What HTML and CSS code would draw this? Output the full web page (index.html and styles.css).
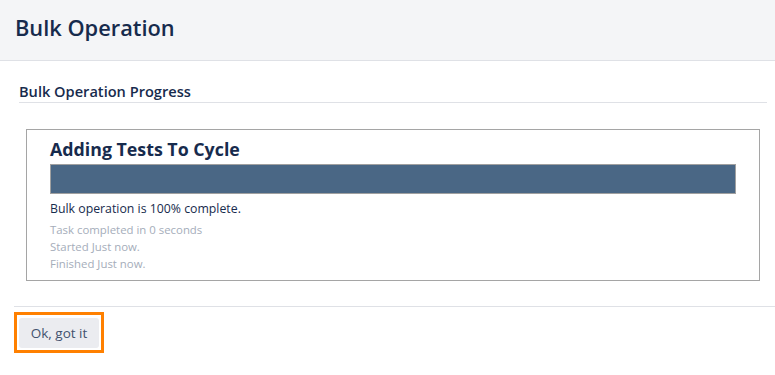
FILE: index.html
```html
<!DOCTYPE html>
<html>
<head>
<meta charset="utf-8">
<link rel="stylesheet" href="styles.css">
</head>
<body>
<header class="page-header">
  <h1 class="page-title">Bulk Operation</h1>
</header>
<main class="content">
  <h2 class="section-title">Bulk Operation Progress</h2>
  <div class="progress-box">
    <h3 class="task-title">Adding Tests To Cycle</h3>
    <div class="progress-track"><div class="progress-fill" style="width:100%"></div></div>
    <p class="status">Bulk operation is 100% complete.</p>
    <p class="meta">Task completed in 0 seconds</p>
    <p class="meta">Started Just now.</p>
    <p class="meta">Finished Just now.</p>
  </div>
</main>
<footer class="footer">
  <span class="focus-ring"><button class="btn">Ok, got it</button></span>
</footer>
</body>
</html>
```
FILE: styles.css
```css
html, body {
  margin: 0;
  padding: 0;
  background: #fff;
  font-family: "Open Sans", "Noto Sans", sans-serif;
  color: #172b4d;
}
.page-header {
  height: 60px;
  background: #f4f5f7;
  border-bottom: 1px solid #dfe1e6;
  display: flex;
  align-items: center;
  padding-left: 15px;
}
.page-title {
  margin: 0;
  font-size: 21.8px;
  font-weight: 600;
  color: #172b4d;
  line-height: 28px;
  padding-bottom: 4px;
}
.content {
  padding: 20px 8px 0 19px;
}
.section-title {
  margin: 0;
  font-size: 14.6px;
  font-weight: 600;
  line-height: 20px;
  padding-bottom: 1px;
  border-bottom: 1px solid #dfe1e6;
}
.progress-box {
  margin: 26px 7px 0 7px;
  border: 1px solid #a5a5a5;
  padding: 6px 23px 8px 23px;
}
.task-title {
  margin: 0;
  font-size: 17.8px;
  font-weight: 700;
  line-height: 26px;
}
.progress-track {
  margin-top: 2px;
  height: 28px;
  border: 1px solid #a0a0a0;
  background: #fff;
}
.progress-fill {
  height: 100%;
  background: #4a6785;
}
.status {
  margin: 6px 0 4px;
  font-size: 12.3px;
  line-height: 17px;
}
.meta {
  margin: 0;
  font-size: 11.4px;
  line-height: 17px;
  color: #a5adba;
}
.footer {
  margin: 25px 0 0 14px;
  border-top: 1px solid #dfe1e6;
  padding: 5px 0 0 0;
}
.focus-ring {
  display: inline-block;
  border: 3px solid #ff8000;
  padding: 3px 2px 2px 2px;
  line-height: 0;
}
.btn {
  width: 80px;
  height: 30px;
  border: none;
  border-radius: 3px;
  background: #ebecf0;
  color: #42526e;
  font-family: "Open Sans", "Noto Sans", sans-serif;
  font-size: 13.5px;
  padding: 0;
}
```
